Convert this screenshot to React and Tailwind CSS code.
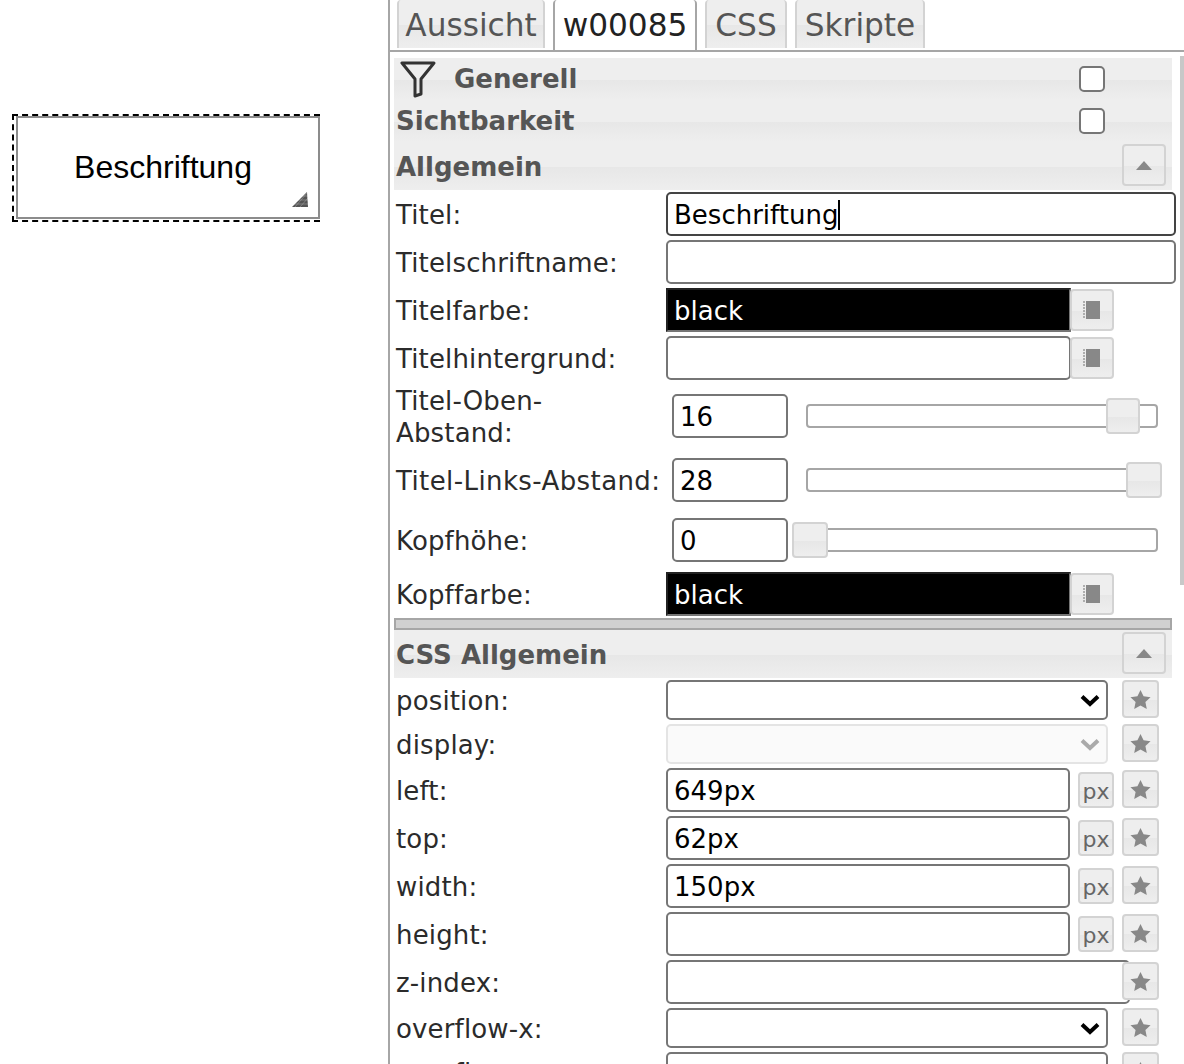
const GLASS = 'bg-[linear-gradient(#eeeeee_52%,#e7e7e7_52%,#eeeeee_100%)]'

function Triangle() {
  return (
    <svg width="16" height="9" viewBox="0 0 16 9"><polygon points="8,0 16,9 0,9" fill="#888888" /></svg>
  )
}

function Star() {
  return (
    <svg className="blur-[0.5px]" width="21" height="21" viewBox="0 0 24 24">
      <polygon points="12,1 15.5,8.3 23.5,9.4 17.6,14.8 19.2,22.8 12,18.8 4.8,22.8 6.4,14.8 0.5,9.4 8.5,8.3" fill="#888888" />
    </svg>
  )
}

function Chevron({ color = '#000000' }) {
  return (
    <svg width="20" height="13" viewBox="0 0 20 13" fill="none">
      <path d="M2 2.5l8 7.5 8-7.5" stroke={color} strokeWidth="4" />
    </svg>
  )
}

function PickerIcon() {
  return (
    <svg className="blur-[0.4px]" width="18" height="20" viewBox="0 0 18 20">
      <rect x="3" y="1" width="14" height="18" fill="#888888" />
      <path d="M0 2h2M0 5h2M0 8h2M0 11h2M0 14h2M0 17h2" stroke="#999999" strokeWidth="1.5" />
    </svg>
  )
}

function Funnel() {
  return (
    <svg className="blur-[0.4px]" width="36" height="37" viewBox="0 0 36 37" fill="none">
      <path d="M2 2h32L21 18v15l-6 2V18z" stroke="#333333" strokeWidth="3" strokeLinejoin="round" />
    </svg>
  )
}

function Checkbox() {
  return <div className="w-[26px] h-[26px] rounded-[5px] border-2 border-[#767676] bg-white" />
}

function GlassButton({ className, children }) {
  return (
    <div className={`flex items-center justify-center shrink-0 rounded-[4px] border-2 border-[#d3d3d3] text-[#666666] ${GLASS} ${className}`}>
      {children}
    </div>
  )
}

function Box({ width, focused, children }) {
  return (
    <div className={`h-[44px] shrink-0 flex items-center px-[6px] pt-[2px] rounded-[5px] border-2 bg-white text-[26px] text-black ${width} ${focused ? 'border-[#444444]' : 'border-[#767676]'}`}>
      {children}
    </div>
  )
}

function Row({ label, height = 'h-[48px]', tracking = 'tracking-[0.15px]', children }) {
  return (
    <div className={`flex items-center ${height}`}>
      <div className={`w-[272px] shrink-0 pl-[2px] pt-[2px] text-[#2b2b2b] ${tracking}`}>{label}</div>
      {children}
    </div>
  )
}

function ColorRow({ label, value }) {
  return (
    <Row label={label}>
      {value ? (
        <div className="w-[405px] h-[44px] flex items-center px-[6px] pt-[2px] bg-black border-2 border-[#222222] border-b-[#767676] border-r-[#767676] text-white text-[26px]">
          {value}
        </div>
      ) : (
        <Box width="w-[405px]" />
      )}
      <GlassButton className="w-[44px] h-[42px] ml-[-1px]"><PickerIcon /></GlassButton>
    </Row>
  )
}

function SliderRow({ label, value, height, handle, tracking }) {
  return (
    <Row label={label} height={height} tracking={tracking}>
      <div className="ml-[6px]"><Box width="w-[116px]">{value}</Box></div>
      <div className="relative ml-[18px] w-[352px] h-[24px] rounded-[4px] border-2 border-[#a6a6a6] bg-white">
        <GlassButton className={`absolute top-[-8px] h-[36px] ${handle}`} />
      </div>
    </Row>
  )
}

function HeaderRow({ height, children }) {
  return <div className={`flex items-center font-bold text-[#555555] ${GLASS} ${height}`}>{children}</div>
}

function StarRow({ label, height = 'h-[44px]', box, px }) {
  return (
    <Row label={label} height={height}>
      {box}
      {px && (
        <GlassButton className="w-[36px] h-[36px] ml-[8px] pt-[3px] text-[22px]">px</GlassButton>
      )}
      <GlassButton className={`w-[37px] h-[38px] mb-[2px] ${px ? 'ml-[8px]' : 'ml-[14px]'}`}><Star /></GlassButton>
    </Row>
  )
}

function SelectBox({ disabled }) {
  return (
    <div className={`w-[442px] h-[40px] shrink-0 flex items-center justify-end pr-[6px] rounded-[5px] border-2 ${disabled ? 'border-[#e4e4e4] bg-[#fafafa]' : 'border-[#767676] bg-white'}`}>
      <Chevron color={disabled ? '#aaaaaa' : '#000000'} />
    </div>
  )
}

const TABS = [
  { name: 'Aussicht', width: 'w-[148px]' },
  { name: 'w00085', width: 'w-[144px]', active: true },
  { name: 'CSS', width: 'w-[82px]' },
  { name: 'Skripte', width: 'w-[130px]' },
]

export default function App() {
  return (
    <div className="flex w-[1184px] h-[1064px] overflow-hidden bg-white font-['DejaVu_Sans',sans-serif] text-[26px] leading-[32px]">
      <div className="w-[388px] shrink-0 pl-[12px] pt-[114px]">
        <div className="w-[308px] h-[108px] border-2 border-dashed border-black border-r-0 pl-[2px]">
          <div className="relative w-[304px] h-[103px] border-2 border-[#8c8c8c] flex justify-center pt-[33px] font-['Liberation_Sans',sans-serif] text-[32px] leading-[32px] text-black">
            <span className="mr-[10px]">Beschriftung</span>
            <svg className="absolute right-[10px] bottom-[10px]" width="16" height="15" viewBox="0 0 16 15">
              <polygon points="15,0 16,15 0,15" fill="#555555" />
              <path d="M3 15L15 1M8 15L16 6M0 12h16M5 8h11M10 4h6" stroke="#ffffff" strokeWidth="0.5" opacity="0.5" />
            </svg>
          </div>
        </div>
      </div>

      <div className="flex-1 min-w-0 border-l-2 border-[#a6a6a6]">
        <div className="flex h-[52px] gap-[8px] pl-[7px] border-b-2 border-[#a6a6a6] text-[31.2px] leading-[50px]">
          {TABS.map((tab) => (
            <div
              key={tab.name}
              className={`${tab.width} text-center rounded-t-[4px] border-2 border-t-0 border-b-0 ${tab.active ? 'h-[50px] bg-white text-[#222222] border-[#a6a6a6]' : `h-[48px] text-[#555555] border-[#d3d3d3] ${GLASS}`}`}
            >
              {tab.name}
            </div>
          ))}
        </div>

        <div className="relative pl-[4px] pt-[6px]">
          <div className="absolute right-0 top-[4px] w-[4px] h-[529px] bg-[#c8c8c8]" />
          <div className="w-[778px]">
            <HeaderRow height="h-[42px]">
              <div className="ml-[6px] w-[54px]"><Funnel /></div>
              <span className="flex-1">Generell</span>
              <div className="mr-[67px]"><Checkbox /></div>
            </HeaderRow>
            <HeaderRow height="h-[42px]">
              <span className="flex-1 pl-[2px]">Sichtbarkeit</span>
              <div className="mr-[67px]"><Checkbox /></div>
            </HeaderRow>
            <HeaderRow height="h-[48px]">
              <span className="flex-1 pl-[2px] pt-[2px]">Allgemein</span>
              <GlassButton className="w-[44px] h-[42px] mr-[6px] mb-[2px]"><Triangle /></GlassButton>
            </HeaderRow>
          </div>

          <Row label="Titel:">
            <Box width="w-[510px]" focused>
              Beschriftung<span className="w-[2px] h-[30px] bg-black" />
            </Box>
          </Row>
          <Row label="Titelschriftname:"><Box width="w-[510px]" /></Row>
          <ColorRow label="Titelfarbe:" value="black" />
          <ColorRow label="Titelhintergrund:" />
          <SliderRow label={<>Titel-Oben-<br />Abstand:</>} value="16" height="h-[68px]" handle="left-[298px] w-[34px]" />
          <SliderRow label="Titel-Links-Abstand:" tracking="tracking-[0.4px]" value="28" height="h-[60px]" handle="left-[318px] w-[36px]" />
          <SliderRow label="Kopfhöhe:" value="0" height="h-[60px]" handle="left-[-16px] w-[36px]" />
          <ColorRow label="Kopffarbe:" value="black" />

          <div className="w-[778px] h-[12px] bg-[#d0d0d0] border-2 border-[#a6a6a6]" />

          <div className="w-[778px]">
            <HeaderRow height="h-[48px]">
              <span className="flex-1 pl-[2px] pt-[2px]">CSS Allgemein</span>
              <GlassButton className="w-[44px] h-[42px] mr-[6px] mb-[2px]"><Triangle /></GlassButton>
            </HeaderRow>
          </div>

          <StarRow label="position:" box={<SelectBox />} />
          <StarRow label="display:" box={<SelectBox disabled />} />
          <StarRow label="left:" height="h-[48px]" box={<Box width="w-[404px]">649px</Box>} px />
          <StarRow label="top:" height="h-[48px]" box={<Box width="w-[404px]">62px</Box>} px />
          <StarRow label="width:" height="h-[48px]" box={<Box width="w-[404px]">150px</Box>} px />
          <StarRow label="height:" height="h-[48px]" box={<Box width="w-[404px]" />} px />
          <Row label="z-index:">
            <Box width="w-[464px]" />
            <GlassButton className="w-[37px] h-[38px] ml-[-8px] mb-[2px] relative"><Star /></GlassButton>
          </Row>
          <StarRow label="overflow-x:" box={<SelectBox />} />
          <StarRow label="overflow-y:" box={<SelectBox />} />
        </div>
      </div>
    </div>
  )
}
